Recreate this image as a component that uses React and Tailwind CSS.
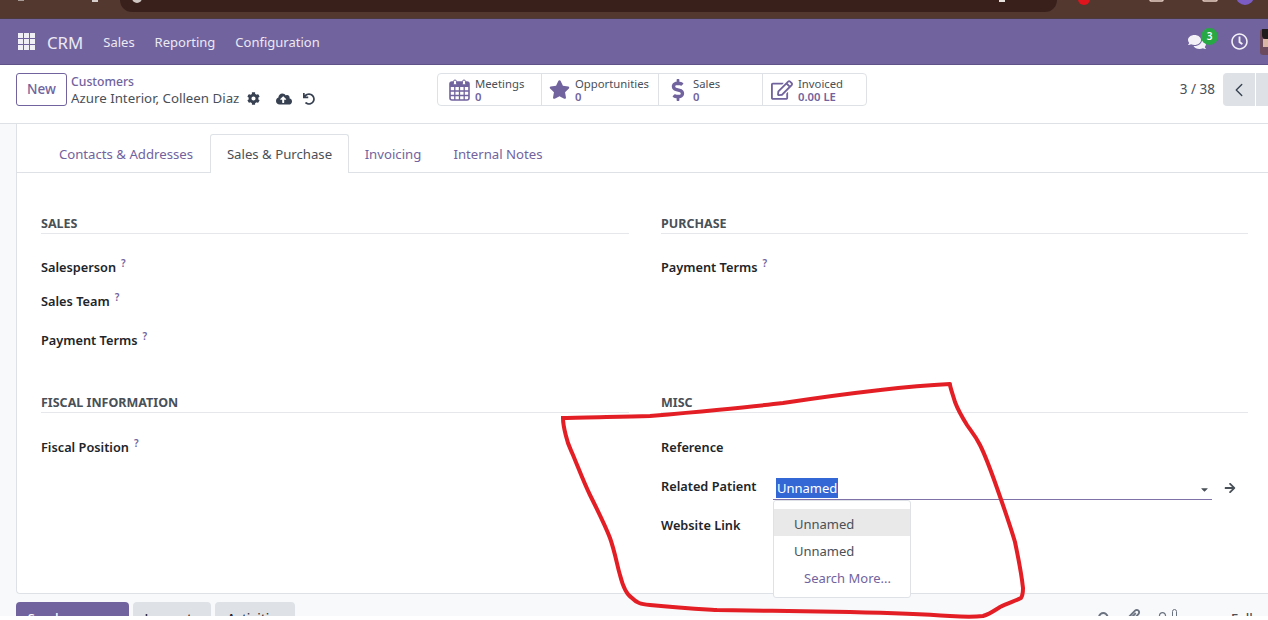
import React from 'react';
import { ChevronLeft } from 'lucide-react';
import { FaCog, FaCloudUploadAlt, FaUndo, FaStar, FaDollarSign, FaRegEdit, FaComments, FaRegClock, FaCaretDown, FaArrowRight, FaSearch, FaPaperclip, FaRegUser } from 'react-icons/fa';

const CalendarIcon = () => (
  <svg width="21" height="22" viewBox="0 0 21 22" className="text-[#71639e]">
    <rect x="1" y="3" width="19" height="18" rx="2" fill="none" stroke="currentColor" strokeWidth="1.6" />
    <rect x="1" y="3" width="19" height="5" fill="currentColor" />
    <path d="M1 12h19M1 16.500h19M5.800 8v13M10.500 8v13M15.200 8v13" stroke="currentColor" strokeWidth="1.300" />
    <rect x="4.500" y="1" width="3" height="5" rx="1.500" fill="white" stroke="currentColor" />
    <rect x="13.500" y="1" width="3" height="5" rx="1.500" fill="white" stroke="currentColor" />
  </svg>
);

const stats = [
  { label: 'Meetings', value: '0', icon: <CalendarIcon />, width: 'w-[104px]', pad: 'pl-[11px]', gap: 'gap-[5px]' },
  { label: 'Opportunities', value: '0', icon: <FaStar className="text-[#71639e] text-[21px]" />, width: 'w-[117px]', pad: 'pl-[7px]', gap: 'gap-[5px]' },
  { label: 'Sales', value: '0', icon: <FaDollarSign className="text-[#71639e] text-[22px]" />, width: 'w-[104px]', pad: 'pl-[8px]', gap: 'gap-[4px]' },
  { label: 'Invoiced', value: '0.00 LE', icon: <FaRegEdit className="text-[#71639e] text-[22px]" />, width: 'w-[105px]', pad: 'pl-[8px]', gap: 'gap-[5px]' },
];

const tabs = [
  { label: 'Contacts & Addresses', width: 'w-[168px]' },
  { label: 'Sales & Purchase', width: 'w-[139px]', active: true },
  { label: 'Invoicing', width: 'w-[88px]' },
  { label: 'Internal Notes', width: 'w-[122px]' },
];

const GroupTitle = ({ children }) => (
  <div className="text-[12.500px] leading-[18px] font-bold text-[#495057] uppercase pt-[1px] border-b border-[#e5e7eb]">
    {children}
  </div>
);

const FieldLabel = ({ children, help, className }) => (
  <div className={`text-[12.750px] leading-[18px] font-semibold text-[#212529] ${className || ''}`}>
    {children}
    {help && <sup className="ml-[5px] text-[10px] text-[#71639e] font-semibold">?</sup>}
  </div>
);

const App = () => {
  return (
    <div className="relative w-[1268px] h-[620px] overflow-hidden bg-white font-['Noto_Sans',sans-serif]">
      <div className="h-[616px] overflow-hidden bg-[#f8f9fb]">
        {/* browser toolbar, cut off at the top of the shot */}
        <div className="h-[19px] bg-[#533830] border-b border-[#4b3a3f]">
          <div className="ml-[120px] w-[937px] h-[12px] bg-[#3a201b] rounded-b-[12px]" />
        </div>

        {/* Navbar */}
        <div className="h-[46px] bg-[#71639e] border-b border-[#5f5288] flex items-center text-[#ece9f3]">
          <div className="ml-[18px] grid grid-cols-3 gap-[1.500px] w-[17px]">
            {Array.from({ length: 9 }).map((_, i) => (
              <span key={i} className="w-[4.500px] h-[4.500px] bg-[#f1eff6]" />
            ))}
          </div>
          <span className="ml-[12px] mt-[2px] text-[16.800px]">CRM</span>
          <span className="ml-[20px] mt-[2px] text-[13px]">Sales</span>
          <span className="ml-[20px] mt-[2px] text-[13px]">Reporting</span>
          <span className="ml-[20px] mt-[2px] text-[13px]">Configuration</span>
          <div className="ml-auto flex items-center">
            <div className="relative mr-[25px]">
              <FaComments className="text-[#f3f1f7] text-[18px]" />
              <span className="absolute -top-[5px] left-[13px] w-[17px] h-[17px] rounded-full bg-[#28a745] text-[10px] leading-[17px] text-center text-white font-semibold">3</span>
            </div>
            <FaRegClock className="text-[#f3f1f7] text-[17px] mr-[12px]" />
            <div className="w-[8px] h-[26px] rounded-l-[3px] bg-[#6b4a5e] overflow-hidden">
              <div className="w-[6px] h-[10px] ml-[2px] bg-[#1f1a1c] rounded-bl-[4px]" />
              <div className="w-[5px] h-[8px] ml-[3px] bg-[#d9b5a5]" />
            </div>
          </div>
        </div>

        {/* Control panel */}
        <div className="h-[59px] bg-white border-b border-[#dee2e6] flex items-start pt-[8px]">
          <button className="ml-[16px] w-[51px] h-[33px] border border-[#71639e] rounded-[3px] text-[13.500px] font-medium text-[#71639e]">
            New
          </button>
          <div className="ml-[4px] w-[366px] pt-[1px]">
            <div className="text-[12.200px] leading-[16px] font-medium text-[#71639e]">Customers</div>
            <div className="flex items-center h-[17px] text-[#495057]">
              <span className="text-[13.300px] leading-[17px] whitespace-nowrap">Azure Interior, Colleen Diaz</span>
              <FaCog className="ml-[8px] text-[13px] text-[#374151]" />
              <FaCloudUploadAlt className="ml-[16px] text-[16px] text-[#374151]" />
              <FaUndo className="ml-[11px] text-[12px] text-[#374151]" />
            </div>
          </div>
          <div className="flex h-[33px] border border-[#dee2e6] rounded-[4px] w-[430px]">
            {stats.map((s, i) => (
              <div key={s.label} className={`${s.width} ${s.pad} ${s.gap} shrink-0 flex items-center ${i < 3 ? 'border-r border-[#dee2e6]' : ''}`}>
                {s.icon}
                <div className="text-[11.300px] leading-[13.500px] pt-[1px]">
                  <div className="text-[#495057]">{s.label}</div>
                  <div className="font-semibold text-[#71639e]">{s.value}</div>
                </div>
              </div>
            ))}
          </div>
          <div className="ml-auto flex items-center h-[33px]">
            <span className="text-[13.500px] text-[#495057] mr-[8px]">3 / 38</span>
            <div className="w-[32px] h-[33px] bg-[#dee2e6] rounded-l-[4px] flex items-center justify-center">
              <ChevronLeft size={22} strokeWidth={1.5} className="text-[#374151]" />
            </div>
            <div className="ml-[1px] w-[12px] h-[33px] bg-[#dee2e6]" />
          </div>
        </div>

        {/* Sheet */}
        <div className="ml-[16px] h-[470px] bg-white border-l border-b border-[#dee2e6] rounded-bl-[4px] pt-[10px]">
          <div className="flex h-[39px] border-b border-[#dee2e6] pl-[25px]">
            {tabs.map((t) => (
              <div
                key={t.label}
                className={`${t.width} shrink-0 h-[39px] flex items-center justify-center text-[13.200px] whitespace-nowrap ${
                  t.active
                    ? 'pt-[2px] pb-[1px] bg-white border border-b-0 border-[#dee2e6] rounded-t-[3px] text-[#495057]'
                    : 'pt-[2px] border border-transparent text-[#71639e]'
                }`}
              >
                {t.label}
              </div>
            ))}
          </div>

          <div className="grid grid-cols-[588px_587px] gap-x-[32px] pl-[24px] pt-[41px]">
            <div>
              <GroupTitle>Sales</GroupTitle>
              <FieldLabel help className="mt-[24px]">Salesperson</FieldLabel>
              <FieldLabel help className="mt-[16px]">Sales Team</FieldLabel>
              <FieldLabel help className="mt-[21px]">Payment Terms</FieldLabel>
            </div>
            <div>
              <GroupTitle>Purchase</GroupTitle>
              <FieldLabel help className="mt-[24px]">Payment Terms</FieldLabel>
            </div>
            <div className="mt-[44px]">
              <GroupTitle>Fiscal Information</GroupTitle>
              <FieldLabel help className="mt-[25px]">Fiscal Position</FieldLabel>
            </div>
            <div className="mt-[44px]">
              <GroupTitle>Misc</GroupTitle>
              <FieldLabel className="mt-[25px]">Reference</FieldLabel>
              <div className="flex items-start mt-[21px]">
                <FieldLabel className="w-[112px] shrink-0">Related Patient</FieldLabel>
                <div className="relative w-[439px] h-[24px] -mt-[1px] border-b border-[#7f72a8] text-[13px] text-white">
                  <span className="absolute left-[3px] top-[2px] h-[20px] px-[1px] leading-[20px] bg-[#3367d6]">Unnamed</span>
                  <FaCaretDown className="absolute right-[2px] top-[8px] text-[11px] text-[#495057]" />
                  {/* autocomplete dropdown */}
                  <div className="absolute left-0 top-[24px] w-[138px] h-[98px] z-10 bg-white border border-[#dee2e6] rounded-[3px] py-[8px] text-[13px] leading-[30px] text-[#495057]">
                    <div className="h-[27px] pl-[20px] bg-[#e9e9e9]">Unnamed</div>
                    <div className="h-[27px] pl-[20px]">Unnamed</div>
                    <div className="h-[27px] pl-[30px] text-[#71639e]">Search More...</div>
                  </div>
                </div>
                <FaArrowRight className="ml-[12px] mt-[5px] text-[12px] text-[#495057]" />
              </div>
              <FieldLabel className="mt-[16px]">Website Link</FieldLabel>
            </div>
          </div>
        </div>

        {/* Chatter */}
        <div className="relative flex items-start mt-[8px] pl-[16px] text-[13px] font-medium">
          <button className="w-[113px] h-[33px] bg-[#71639e] text-white rounded-[4px]">Send message</button>
          <button className="ml-[4px] w-[78px] h-[33px] bg-[#dee2e6] text-[#212529] rounded-[4px]">Log note</button>
          <button className="ml-[4px] w-[80px] h-[33px] bg-[#dee2e6] text-[#212529] rounded-[4px]">Activities</button>
          <div className="ml-auto flex items-center h-[33px] -mr-[3px] text-[#6b7280]">
            <FaSearch className="text-[13px]" />
            <FaPaperclip className="ml-[15px] -mt-[4px] text-[15px]" />
            <FaRegUser className="ml-[15px] text-[13px]" />
            <span className="ml-[3px] -mt-[8px] w-[5px] h-[11px] border border-[#6b7280] rounded-full" />
            <span className="ml-[54px] text-[#495057]">Follow</span>
          </div>
        </div>
      </div>

      {/* red marker annotation and cropped browser icons sit on top of the page */}
      <svg className="absolute inset-0 pointer-events-none" width="1268" height="620" fill="none">
        <path
          d="M950 384 C 930 385 883 388 783 403 C 750 407 717 410 650 416 C 620 417 590 417 563 418 C 563 425 565 432 566 436 C 568 445 570 448 573 455 C 580 472 585 485 590 495 C 600 515 605 525 610 538 C 615 552 617 565 620 575 C 623 587 627 595 632 598 C 637 603 640 604 650 605 C 680 608 700 609 717 610 C 760 611 810 611 850 612 C 890 613 920 614 950 616 C 965 617 975 617 983 616 C 990 614 995 610 1000 607 C 1008 603 1015 601 1021 598 C 1023 595 1023 590 1023 588 C 1021 570 1018 557 1015 542 C 1010 525 1003 505 997 488 C 990 468 985 455 980 445 C 975 435 971 431 967 425 C 962 417 958 410 955 402 C 953 395 951 390 950 385"
          stroke="#e31e24"
          strokeWidth="4"
          strokeLinecap="round"
        />
        <circle cx="1084" cy="-1" r="6" fill="#e0141c" />
        <circle cx="1245" cy="-4" r="9" fill="#7a5cc4" />
        <rect x="1150" y="-6" width="13" height="7" rx="1" stroke="#e8cfc6" strokeWidth="1.500" />
        <rect x="1203" y="-6" width="14" height="7" rx="1" stroke="#e8cfc6" strokeWidth="1.500" />
        <rect x="999" y="-4" width="6" height="6" fill="#e8e2df" />
        <circle cx="137" cy="-2" r="5" fill="#cfc5c1" />
        <rect x="18" y="0" width="6" height="1" fill="#a89a95" />
        <rect x="92" y="0" width="6" height="2" fill="#d8d0cc" />
      </svg>
    </div>
  );
};

export default App;
